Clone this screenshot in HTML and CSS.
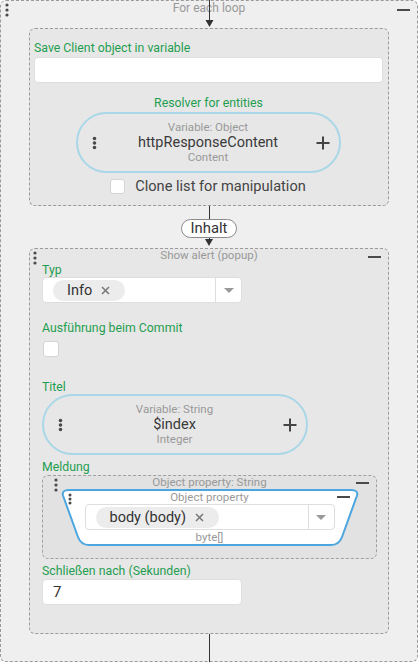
FILE: index.html
```html
<!DOCTYPE html>
<html>
<head>
<meta charset="utf-8">
<link rel="stylesheet" href="styles.css">
</head>
<body>
<div class="loop">
  <svg class="grip grip-loop" width="4" height="14" viewBox="0 0 4 14"><circle cx="2" cy="2" r="1.6"/><circle cx="2" cy="7" r="1.6"/><circle cx="2" cy="12" r="1.6"/></svg>
  <span class="minus minus-loop"></span>
  <div class="loop-head">
    <div class="head-title">For each loop</div>
    <svg class="arrow-in" width="9" height="28" viewBox="0 0 9 28"><path class="arrow-line" d="M4.5 0V21"/><path class="arrow-tip" d="M0.5 20H8.5L4.5 27Z"/></svg>
  </div>

  <div class="block block-save">
    <div class="label">Save Client object in variable</div>
    <div class="input input-save"></div>
    <div class="label label-center">Resolver for entities</div>
    <div class="pill pill-save">
      <svg class="dots" width="5" height="14" viewBox="0 0 5 14"><circle cx="2.5" cy="2.5" r="1.8"/><circle cx="2.5" cy="7" r="1.8"/><circle cx="2.5" cy="11.5" r="1.8"/></svg>
      <div class="pill-text">
        <span class="pill-sub">Variable: Object</span>
        <span class="pill-main">httpResponseContent</span>
        <span class="pill-sub">Content</span>
      </div>
      <svg class="plus" width="14" height="14" viewBox="0 0 14 14"><path d="M7 0.5V13.5M0.5 7H13.5"/></svg>
    </div>
    <div class="check-row"><span class="checkbox"></span><span>Clone list for manipulation</span></div>
  </div>

  <div class="link">
    <span class="vline link-top"></span>
    <span class="tag">Inhalt</span>
    <span class="vline link-bottom"></span>
    <span class="arrowhead"></span>
  </div>

  <div class="block block-alert">
    <svg class="grip grip-alert" width="4" height="14" viewBox="0 0 4 14"><circle cx="2" cy="2" r="1.6"/><circle cx="2" cy="7" r="1.6"/><circle cx="2" cy="12" r="1.6"/></svg>
    <span class="minus minus-alert"></span>
    <div class="block-title">Show alert (popup)</div>
    <div class="label label-typ">Typ</div>
    <div class="select select-typ">
      <span class="chip">Info<svg class="x" width="9" height="9" viewBox="0 0 9 9"><path d="M1 1L8 8M8 1L1 8"/></svg></span>
      <span class="divider"></span>
      <span class="caret-box"><span class="caret"></span></span>
    </div>
    <div class="label label-commit">Ausführung beim Commit</div>
    <span class="checkbox checkbox-commit"></span>
    <div class="label label-titel">Titel</div>
    <div class="pill pill-titel">
      <svg class="dots" width="5" height="14" viewBox="0 0 5 14"><circle cx="2.5" cy="2.5" r="1.8"/><circle cx="2.5" cy="7" r="1.8"/><circle cx="2.5" cy="11.5" r="1.8"/></svg>
      <div class="pill-text">
        <span class="pill-sub">Variable: String</span>
        <span class="pill-main">$index</span>
        <span class="pill-sub">Integer</span>
      </div>
      <svg class="plus" width="14" height="14" viewBox="0 0 14 14"><path d="M7 0.5V13.5M0.5 7H13.5"/></svg>
    </div>
    <div class="label label-meldung">Meldung</div>
    <div class="objbox">
      <svg class="grip grip-obj" width="4" height="14" viewBox="0 0 4 14"><circle cx="2" cy="2" r="1.6"/><circle cx="2" cy="7" r="1.6"/><circle cx="2" cy="12" r="1.6"/></svg>
      <span class="minus minus-obj"></span>
      <div class="block-title">Object property: String</div>
      <div class="trap">
        <svg class="trap-shape" viewBox="0 0 298 57" preserveAspectRatio="none"><path d="M8 1H290Q297.5 1 296 6.5L281 48Q278 56 270 56H28Q20 56 17 48L2 6.5Q0.5 1 8 1Z"/></svg>
        <svg class="grip grip-trap" width="4" height="12" viewBox="0 0 4 12"><circle cx="2" cy="2" r="1.5"/><circle cx="2" cy="6" r="1.5"/><circle cx="2" cy="10" r="1.5"/></svg>
        <span class="minus minus-trap"></span>
        <div class="trap-title">Object property</div>
        <div class="select select-body">
          <span class="chip">body (body)<svg class="x" width="9" height="9" viewBox="0 0 9 9"><path d="M1 1L8 8M8 1L1 8"/></svg></span>
          <span class="divider"></span>
          <span class="caret-box"><span class="caret"></span></span>
        </div>
        <div class="trap-type">byte[]</div>
      </div>
    </div>
    <div class="label label-close">Schließen nach (Sekunden)</div>
    <div class="input input-num">7</div>
  </div>

  <div class="vline tail"></div>
</div>
</body>
</html>
```

FILE: styles.css
```css
* { box-sizing: border-box; }

body {
  margin: 0;
  background: #ffffff;
  font-family: Roboto, "Noto Sans", sans-serif;
  color: #333;
}

.loop {
  position: relative;
  width: 418px;
  height: 662px;
  border: 1px dashed #9a9a9a;
  border-radius: 6px;
  background: #efefef;
  padding: 0 28px;
  display: flex;
  flex-direction: column;
}

.grip { position: absolute; fill: #4a4a4a; }
.grip-loop { left: 4px; top: 2px; }
.grip-alert { left: 3px; top: 2px; }
.grip-obj { left: 11px; top: 2px; }
.grip-trap { left: 7px; top: 4px; z-index: 1; }

.minus {
  position: absolute;
  width: 13px;
  height: 2px;
  background: #4a4a4a;
}
.minus-loop { right: 7px; top: 8px; }
.minus-alert { right: 7px; top: 7px; }
.minus-obj { right: 7px; top: 6px; }
.minus-trap { right: 9px; top: 7px; z-index: 1; }

.loop-head {
  position: relative;
  height: 27px;
  flex: none;
}
.head-title {
  text-align: center;
  font-size: 12px;
  line-height: 15px;
  color: #9a9a9a;
}
.arrow-in {
  position: absolute;
  left: 175.5px;
  top: -1px;
}
.arrow-line { stroke: #333; stroke-width: 1; }
.arrow-tip { fill: #333; }

.vline {
  display: block;
  width: 1px;
  background: #333;
  flex: none;
}
.arrowhead {
  display: block;
  width: 0;
  height: 0;
  border-left: 4px solid transparent;
  border-right: 4px solid transparent;
  border-top: 7px solid #333;
  flex: none;
}

.block {
  position: relative;
  border: 1px dashed #9a9a9a;
  border-radius: 6px;
  background: #e7e7e7;
  display: flex;
  flex-direction: column;
  flex: none;
}

.block-save {
  padding: 10px 5px 11px 4px;
}

.label {
  padding-top: 1px;
  font-size: 12.3px;
  line-height: 16px;
  color: #1f9e50;
}
.label-center { text-align: center; margin-top: 11px; }

.input {
  height: 26px;
  background: #fff;
  border: 1px solid #dedede;
  border-radius: 4px;
}
.input-save { margin-top: 1px; }

.pill {
  height: 61px;
  border: 2px solid #a9d7e8;
  border-radius: 31px;
  display: grid;
  grid-template-columns: 32px 1fr 33px;
  align-items: center;
  flex: none;
}
.pill-save { width: 265px; align-self: center; margin-top: 1px; }
.pill-titel { width: 266px; margin-top: -1px; }
.dots { justify-self: center; fill: #4a4a4a; }
.plus { justify-self: center; stroke: #444; stroke-width: 2; fill: none; }
.pill-text {
  display: flex;
  flex-direction: column;
  align-items: center;
}
.pill-sub {
  font-size: 11.5px;
  line-height: 15px;
  color: #999;
}
.pill-main {
  font-size: 14.5px;
  line-height: 15px;
  color: #3a3a3a;
}

.check-row {
  align-self: center;
  display: flex;
  align-items: center;
  gap: 10px;
  margin-top: 6px;
  margin-left: -1px;
  font-size: 14.6px;
  line-height: 15px;
  color: #444;
}
.checkbox {
  display: block;
  width: 15px;
  height: 15px;
  background: #fff;
  border: 1px solid #d4d4d4;
  border-radius: 3px;
  flex: none;
}

.link {
  height: 42px;
  display: flex;
  flex-direction: column;
  align-items: center;
  flex: none;
}
.link-top { height: 13px; }
.link-bottom { height: 1px; }
.tag {
  height: 19px;
  padding: 0 9px;
  border: 1px solid #8a8a8a;
  border-radius: 10px;
  background: #fff;
  font-size: 14.8px;
  line-height: 17px;
  color: #333;
}

.block-alert {
  padding: 0 12px 28px;
}
.block-title {
  text-align: center;
  font-size: 11.5px;
  line-height: 12px;
  color: #999;
}

.select {
  position: relative;
  height: 26px;
  background: #fff;
  border: 1px solid #dedede;
  border-radius: 4px;
  display: flex;
  align-items: center;
  flex: none;
}
.label-typ { margin-bottom: -1px; }
.select-typ { width: 200px; }
.chip {
  display: flex;
  align-items: center;
  gap: 9px;
  height: 21px;
  margin-left: 10px;
  padding: 0 15px 0 14px;
  border-radius: 11px;
  background: #ececec;
  font-size: 14.5px;
  color: #333;
}
.x { stroke: #777; stroke-width: 1.5; fill: none; }
.divider {
  margin-left: auto;
  width: 1px;
  align-self: stretch;
  background: #dedede;
}
.caret-box {
  width: 25px;
  display: flex;
  justify-content: center;
}
.caret {
  width: 0;
  height: 0;
  border-left: 5px solid transparent;
  border-right: 5px solid transparent;
  border-top: 5px solid #999;
}

.label-commit { margin-top: 16px; }
.checkbox-commit { width: 16px; height: 16px; margin: 5px 0 0 1px; }
.label-titel { margin-top: 21px; }
.label-meldung { margin-top: 3px; }

.objbox {
  position: relative;
  width: 335px;
  margin-top: 0;
  padding: 0 0 12px;
  border: 1px dashed #a0a0a0;
  border-radius: 6px;
  background: #e2e2e2;
  display: flex;
  flex-direction: column;
  align-items: center;
  flex: none;
}
.objbox .block-title { align-self: stretch; }

.trap {
  position: relative;
  width: 298px;
  height: 57px;
  margin-top: 1px;
  padding-top: 2px;
  display: flex;
  flex-direction: column;
  align-items: center;
}
.trap-shape {
  position: absolute;
  left: 0;
  top: 0;
  width: 100%;
  height: 100%;
  fill: #fff;
  stroke: #4ba6df;
  stroke-width: 2;
}
.trap-title {
  position: relative;
  font-size: 11.5px;
  line-height: 12px;
  color: #999;
}
.select-body { width: 250px; margin-top: 1px; }
.trap-type {
  position: relative;
  margin-top: 1px;
  font-size: 11.5px;
  line-height: 12px;
  color: #999;
}

.label-close { margin-top: 3px; }
.input-num {
  width: 200px;
  margin-top: 0;
  padding-left: 10px;
  font-size: 15px;
  line-height: 24px;
  color: #333;
}

.tail { height: 30px; align-self: center; }
```
